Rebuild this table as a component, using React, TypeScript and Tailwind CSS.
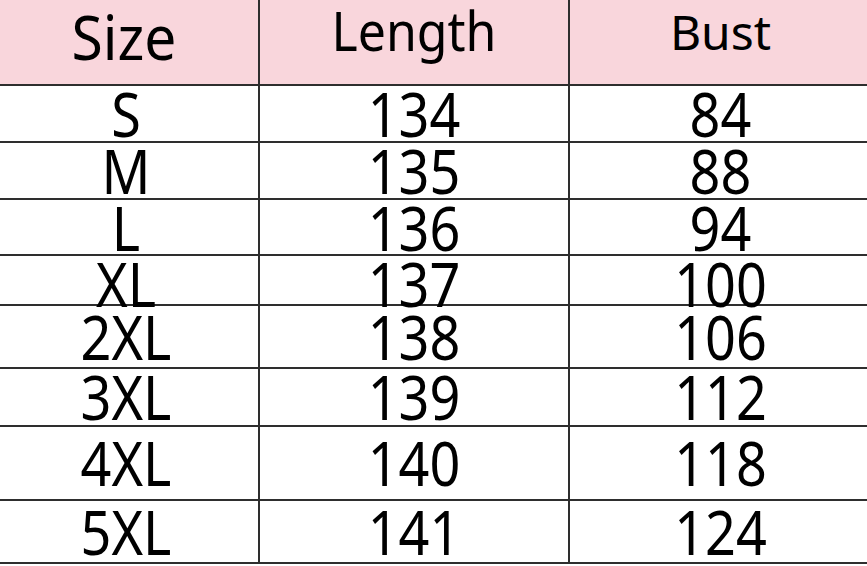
import React from 'react';

const rows = [
  { size: 'S', length: '134', bust: '84', h: 'h-[57px]' },
  { size: 'M', length: '135', bust: '88', h: 'h-[57px]' },
  { size: 'L', length: '136', bust: '94', h: 'h-[56px]' },
  { size: 'XL', length: '137', bust: '100', h: 'h-[50px]' },
  { size: '2XL', length: '138', bust: '106', h: 'h-[63px]' },
  { size: '3XL', length: '139', bust: '112', h: 'h-[58px]' },
  { size: '4XL', length: '140', bust: '118', h: 'h-[74px]' },
  { size: '5XL', length: '141', bust: '124', h: 'h-[63px]' },
];

const cols = 'grid grid-cols-[258px_310px_1fr]';
const cell = 'flex items-center justify-center';

const App: React.FC = () => {
  return (
    <div className="w-[867px] h-[566px] bg-white overflow-hidden text-black font-['Noto_Sans',sans-serif] leading-none">
      <div className={`${cols} h-[86px] bg-[#f9d6dc] border-b-2 border-[#2e2e2e]`}>
        <div className={`${cell} pr-[10px] pb-[12px]`}>
          <span className="text-[57px] scale-y-[1.08]">Size</span>
        </div>
        <div className={`${cell} border-l-2 border-[#2e2e2e] pb-[24px]`}>
          <span className="text-[50px] scale-y-[1.08]">Length</span>
        </div>
        <div className={`${cell} border-l-2 border-[#2e2e2e] pb-[20px] pl-[4px]`}>
          <span className="text-[48px]">Bust</span>
        </div>
      </div>

      {rows.map(r => (
        <div key={r.size} className={`${cols} ${r.h} border-b-2 border-[#2e2e2e]`}>
          <div className={`${cell} pr-[6px] pb-[2px]`}>
            <span className="text-[54px] scale-y-[1.15]">{r.size}</span>
          </div>
          <div className={`${cell} border-l-2 border-[#2e2e2e] pb-[2px]`}>
            <span className="text-[54px] scale-y-[1.15]">{r.length}</span>
          </div>
          <div className={`${cell} border-l-2 border-[#2e2e2e] pl-[4px] pb-[2px]`}>
            <span className="text-[54px] scale-y-[1.15]">{r.bust}</span>
          </div>
        </div>
      ))}
    </div>
  );
};

export default App;
